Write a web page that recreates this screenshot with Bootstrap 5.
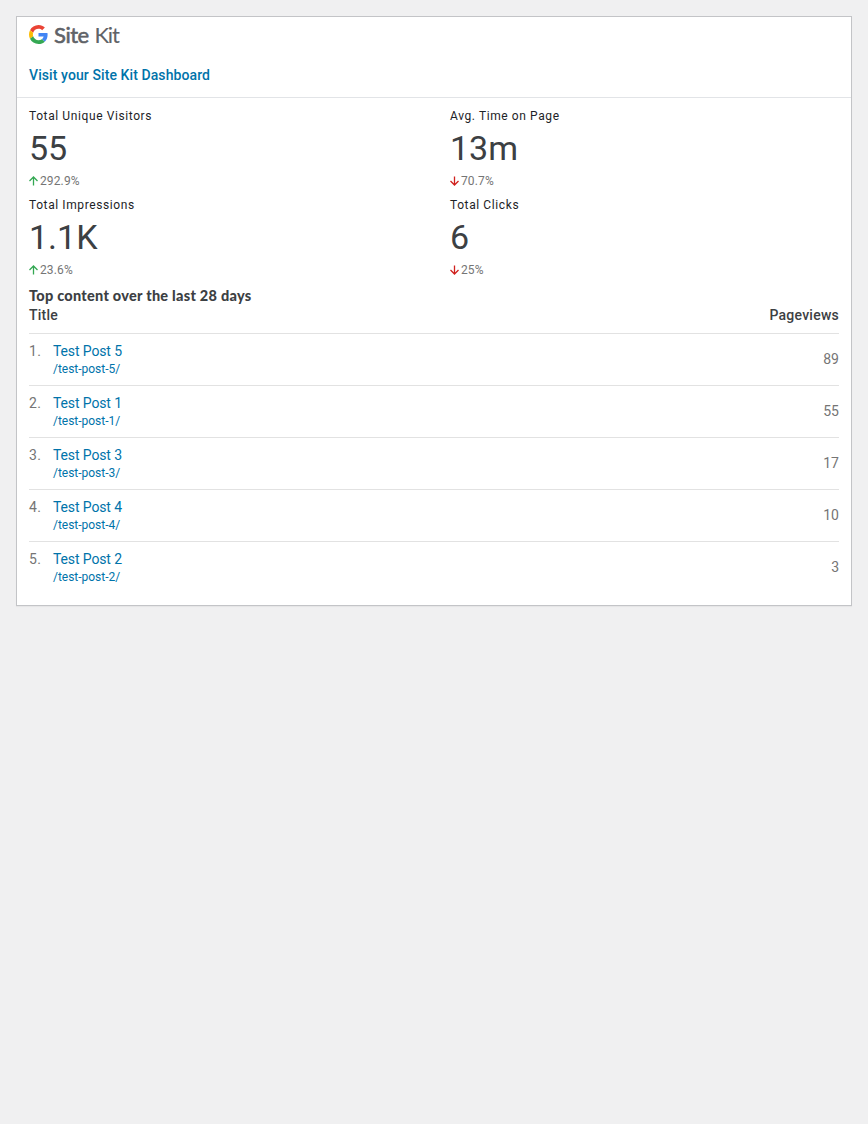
<!DOCTYPE html>
<html lang="en">
<head>
<meta charset="utf-8">
<meta name="viewport" content="width=device-width, initial-scale=1">
<title>Site Kit Dashboard</title>
<link href="https://cdn.jsdelivr.net/npm/bootstrap@5.3.0/dist/css/bootstrap.min.css" rel="stylesheet">
<style>
body{background:#f0f0f1;font-family:Roboto,sans-serif;font-size:14px;line-height:20px;color:#3c4043}
a{color:#0073aa;text-decoration:none}
.widget{border:1px solid #c3c4c7;border-radius:0;box-shadow:0 1px 1px rgba(0,0,0,.04);height:590px;color:#3c4043}
.widget-head{height:81px;border-bottom:1px solid #e2e4e7;padding:8px 12px 0}
.logo{height:22px;color:#5f6368}
.logo-text{font:400 22px/22px Lato,sans-serif;margin:-1px 0 0 6px;letter-spacing:-.45px;-webkit-text-stroke:.6px #5f6368}
.logo-text span{-webkit-text-stroke:.1px #5f6368;letter-spacing:-1.2px;margin-left:.5px}
.visit{margin-top:18px;font-weight:500;letter-spacing:.09px}
.widget-content{padding:8px 12px 0}
.metrics{--bs-gutter-x:32px}
.metric{height:89px}
.metric h3{font-size:12px;line-height:20px;font-weight:400;letter-spacing:.6px;color:#1d2327;margin:0}
.figure-value{font-size:34px;line-height:40px;margin-top:2px}
.change{font-size:12px;line-height:16px;margin-top:5px;color:#757575;gap:2px;letter-spacing:.13px}
.content-title{font:900 14.5px/20px Lato,sans-serif;letter-spacing:.26px;margin:2px 0 0}
.thead-row{height:27px;font-weight:500;line-height:18px;letter-spacing:.25px}
.post-row{height:52px;border-top:1px solid #e2e2e2}
.rank{width:24px;color:#757575}
.post-row a,.rank{line-height:18px;letter-spacing:-.12px}
.rank{letter-spacing:.3px}
.post-row .path{font-size:12px;letter-spacing:-.02px}
.views{color:#757575;margin-top:-2px}
</style>
</head>
<body>
<main class="p-3">
<section class="card widget">
<header class="widget-head">
<div class="logo d-flex">
<svg width="19" height="19" viewBox="0 0 48 48" aria-hidden="true"><path fill="#EA4335" d="M24 9.5c3.54 0 6.71 1.22 9.21 3.6l6.85-6.85C35.9 2.38 30.47 0 24 0 14.62 0 6.51 5.38 2.56 13.22l7.98 6.19C12.43 13.72 17.74 9.5 24 9.5z"/><path fill="#4285F4" d="M46.98 24.55c0-1.57-.15-3.09-.38-4.55H24v9.02h12.94c-.58 2.96-2.26 5.48-4.78 7.18l7.73 6c4.51-4.18 7.09-10.36 7.09-17.65z"/><path fill="#FBBC05" d="M10.53 28.59c-.48-1.45-.76-2.99-.76-4.59s.27-3.14.76-4.59l-7.98-6.19C.92 16.46 0 20.12 0 24s.92 7.54 2.56 10.78l7.97-6.19z"/><path fill="#34A853" d="M24 48c6.48 0 11.93-2.13 15.89-5.81l-7.73-6c-2.15 1.45-4.92 2.3-8.16 2.3-6.26 0-11.57-4.22-13.47-9.91l-7.98 6.19C6.51 42.62 14.62 48 24 48z"/></svg>
<div class="logo-text">Site <span>Kit</span></div>
</div>
<div class="visit"><a href="#">Visit your Site Kit Dashboard</a></div>
</header>
<div class="widget-content">
<div class="row metrics">
<div class="col-6 metric"><h3>Total Unique Visitors</h3><div class="figure-value">55</div><div class="change d-flex align-items-center"><svg width="9" height="10" viewBox="0 0 9 10" fill="none" stroke="#34a853" stroke-width="1.3"><path d="M4.5 9.5V1M.5 5l4-4 4 4"/></svg>292.9%</div></div>
<div class="col-6 metric"><h3>Avg. Time on Page</h3><div class="figure-value">13m</div><div class="change d-flex align-items-center"><svg width="9" height="10" viewBox="0 0 9 10" fill="none" stroke="#d0201d" stroke-width="1.3"><path d="M4.5.5V9M.5 5l4 4 4-4"/></svg>70.7%</div></div>
<div class="col-6 metric"><h3>Total Impressions</h3><div class="figure-value">1.1K</div><div class="change d-flex align-items-center"><svg width="9" height="10" viewBox="0 0 9 10" fill="none" stroke="#34a853" stroke-width="1.3"><path d="M4.5 9.5V1M.5 5l4-4 4 4"/></svg>23.6%</div></div>
<div class="col-6 metric"><h3>Total Clicks</h3><div class="figure-value">6</div><div class="change d-flex align-items-center"><svg width="9" height="10" viewBox="0 0 9 10" fill="none" stroke="#d0201d" stroke-width="1.3"><path d="M4.5.5V9M.5 5l4 4 4-4"/></svg>25%</div></div>
</div>
<h2 class="content-title"><span>Top content over the last 28 days</span></h2>
<div class="thead-row d-flex justify-content-between"><span>Title</span><span>Pageviews</span></div>
<div class="post-row d-flex"><span class="rank pt-2">1.</span><div class="d-flex flex-column pt-2"><a href="#">Test Post 5</a><a class="path" href="#">/test-post-5/</a></div><span class="views ms-auto align-self-center">89</span></div>
<div class="post-row d-flex"><span class="rank pt-2">2.</span><div class="d-flex flex-column pt-2"><a href="#">Test Post 1</a><a class="path" href="#">/test-post-1/</a></div><span class="views ms-auto align-self-center">55</span></div>
<div class="post-row d-flex"><span class="rank pt-2">3.</span><div class="d-flex flex-column pt-2"><a href="#">Test Post 3</a><a class="path" href="#">/test-post-3/</a></div><span class="views ms-auto align-self-center">17</span></div>
<div class="post-row d-flex"><span class="rank pt-2">4.</span><div class="d-flex flex-column pt-2"><a href="#">Test Post 4</a><a class="path" href="#">/test-post-4/</a></div><span class="views ms-auto align-self-center">10</span></div>
<div class="post-row d-flex"><span class="rank pt-2">5.</span><div class="d-flex flex-column pt-2"><a href="#">Test Post 2</a><a class="path" href="#">/test-post-2/</a></div><span class="views ms-auto align-self-center">3</span></div>
</div>
</section>
</main>
<script src="https://cdn.jsdelivr.net/npm/bootstrap@5.3.0/dist/js/bootstrap.bundle.min.js"></script>
</body>
</html>
